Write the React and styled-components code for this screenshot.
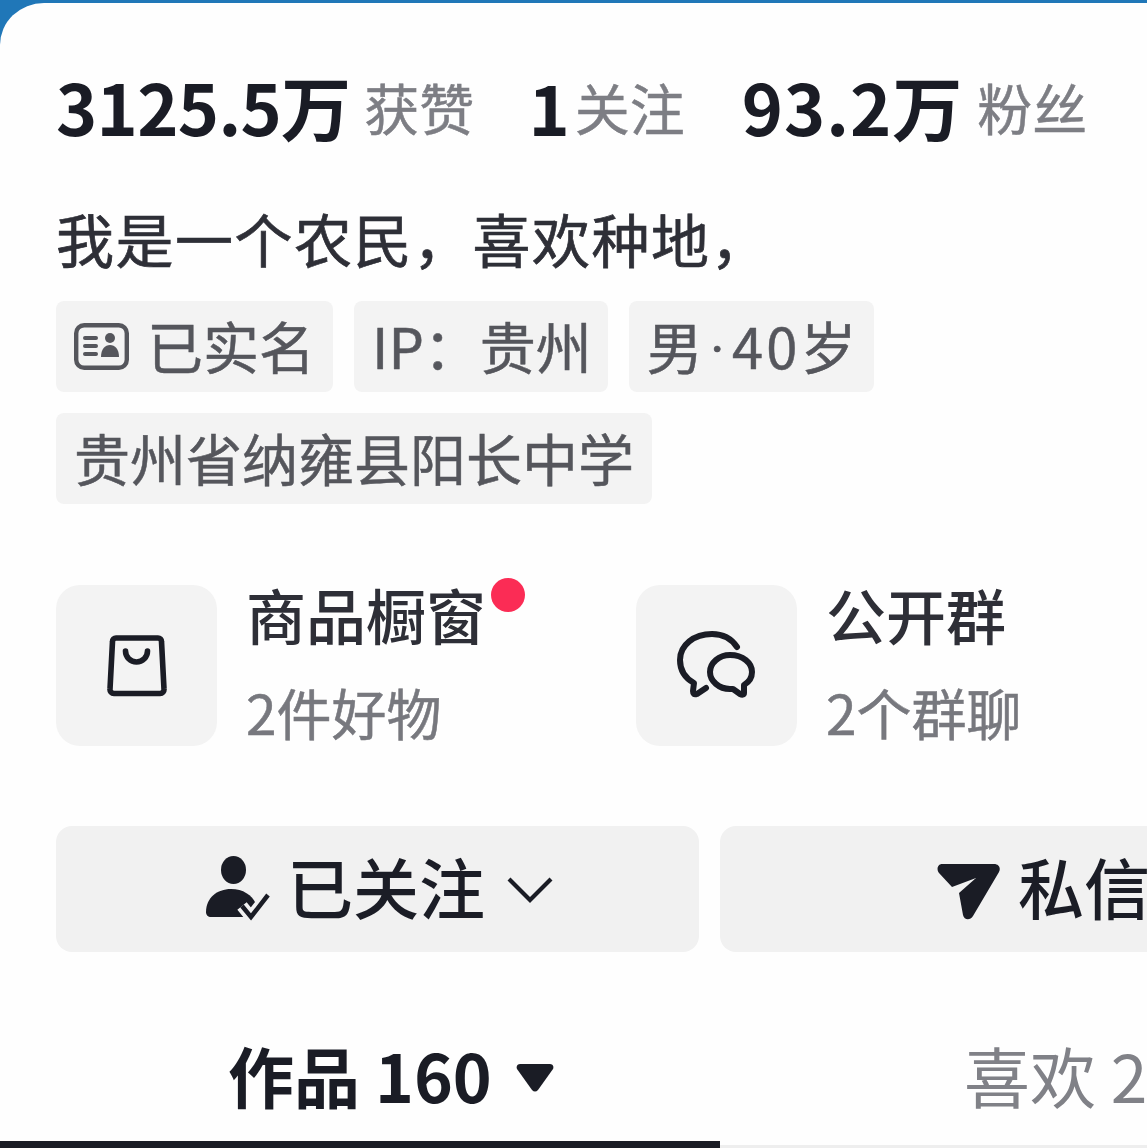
import React from 'react';
import styled, { createGlobalStyle } from 'styled-components';

const GlobalStyle = createGlobalStyle`
  html, body {
    margin: 0;
    padding: 0;
    background: #2077b8;
  }
  body {
    font-family: "Noto Sans CJK SC", "Noto Sans", sans-serif;
    overflow: hidden;
  }
`;

const Card = styled.div`
  width: 1147px;
  height: 1145px;
  margin-top: 3px;
  box-sizing: border-box;
  padding-top: 64px;
  background: #fefefe;
  border-top-left-radius: 44px 42px;
  overflow: hidden;
  display: flex;
  flex-direction: column;
`;

const Stats = styled.div`
  display: flex;
  align-items: center;
  height: 78px;
  padding-left: 56px;
  line-height: 78px;
  white-space: nowrap;
`;

const StatValue = styled.span`
  font-size: 70px;
  font-weight: 700;
  color: #1a1c25;
  letter-spacing: ${(p) => p.$track || 0}px;
  margin-left: ${(p) => p.$offset || 0}px;
`;

const StatLabel = styled.span`
  font-size: 55px;
  color: #7d7e84;
  -webkit-text-stroke: 0.5px #7d7e84;
  margin-left: ${(p) => p.$gap}px;
`;

const Bio = styled.div`
  margin-top: 53px;
  padding-left: 56px;
  font-size: 58px;
  line-height: 80px;
  letter-spacing: 1.5px;
  color: #2e2f37;
  -webkit-text-stroke: 0.7px #2e2f37;
  white-space: nowrap;
`;

const TagList = styled.div`
  display: flex;
  flex-wrap: wrap;
  gap: 21px;
  width: 900px;
  margin-top: 23px;
  padding-left: 56px;
`;

const Tag = styled.div`
  height: 91px;
  box-sizing: border-box;
  padding: 0 18px 4px;
  display: flex;
  align-items: center;
  gap: 18px;
  background: #f3f3f3;
  border-radius: 8px;
  font-size: 56px;
  color: #55565c;
  -webkit-text-stroke: 0.5px #55565c;
  white-space: nowrap;
`;

const IpText = styled.span`
  margin-right: -2px;
`;

const AgeText = styled.span`
  letter-spacing: 3.2px;
  margin-right: -4px;
`;

const NarrowDot = styled.span`
  font-family: "Roboto", sans-serif;
  margin: 0 4px;
`;

const IdSvg = styled.svg`
  flex: none;
  margin-top: 4px;
`;

const Entries = styled.div`
  display: flex;
  margin-top: 81px;
  padding-left: 56px;
`;

const Entry = styled.div`
  width: 580px;
  flex: none;
  display: flex;
  gap: 29px;
`;

const IconTile = styled.div`
  width: 161px;
  height: 161px;
  flex: none;
  display: flex;
  align-items: center;
  justify-content: center;
  background: #f3f3f3;
  border-radius: 24px;
`;

const EntryText = styled.div`
  display: flex;
  flex-direction: column;
`;

const EntryTitleRow = styled.div`
  position: relative;
  width: fit-content;
  height: 58px;
  line-height: 58px;
  font-size: 60px;
  font-weight: 500;
  color: #2e2f37;
  white-space: nowrap;
`;

const Dot = styled.span`
  position: absolute;
  right: -39px;
  top: -7px;
  width: 34px;
  height: 34px;
  border-radius: 50%;
  background: #fb2c55;
`;

const EntrySub = styled.div`
  margin-top: 35px;
  line-height: 66px;
  font-size: 55px;
  color: #77787e;
  -webkit-text-stroke: 0.5px #77787e;
  white-space: nowrap;
`;

const Actions = styled.div`
  display: flex;
  gap: 21px;
  margin-top: 80px;
  padding-left: 56px;
`;

const ActionButton = styled.div`
  width: 643px;
  height: 126px;
  flex: none;
  box-sizing: border-box;
  padding: 0 0 8px ${(p) => p.$pad}px;
  display: flex;
  align-items: center;
  gap: 22px;
  background: #f1f1f1;
  border-radius: 16px;
  font-size: 66px;
  font-weight: 500;
  color: #1b1d26;
  white-space: nowrap;
`;

const ActionIcon = styled.svg`
  flex: none;
  margin-top: ${(p) => p.$drop}px;
  margin-right: ${(p) => p.$pull || 0}px;
`;

const Tabs = styled.div`
  display: flex;
  margin-top: 63px;
`;

const Tab = styled.div`
  width: 720px;
  height: 133px;
  flex: none;
  box-sizing: border-box;
  padding: 19px 0 0 ${(p) => p.$pad}px;
  display: flex;
  align-items: flex-start;
  gap: 24px;
  font-size: 66px;
  line-height: 80px;
  font-weight: ${(p) => (p.$active ? 600 : 400)};
  color: ${(p) => (p.$active ? '#1a1c25' : '#808187')};
  border-bottom: ${(p) => (p.$active ? '7px solid #1a1c25' : '3px solid #eeeeee')};
  white-space: nowrap;
`;

const Caret = styled.svg`
  margin-top: 29px;
  flex: none;
`;

const IdIcon = () => (
  <IdSvg width="55" height="47" viewBox="0 0 55 47">
    <rect x="2.2" y="2.2" width="50.6" height="42.6" rx="8" fill="none" stroke="#55565c" strokeWidth="4.4" />
    <path d="M11 15h11M11 23h11M11 31h11" stroke="#55565c" strokeWidth="4" strokeLinecap="round" />
    <circle cx="36" cy="15" r="5" fill="#55565c" />
    <path d="M27 34c0-8 4-12 9-12s9 4 9 12z" fill="#55565c" />
  </IdSvg>
);

const BagIcon = () => (
  <svg width="60" height="62" viewBox="0 0 60 62">
    <path d="M9 3h42a3.5 3.5 0 0 1 3.5 3.5L57 54a4 4 0 0 1-4 4.5H7a4 4 0 0 1-4-4.5L5.5 6.5A3.5 3.5 0 0 1 9 3z" fill="none" stroke="#1a1c25" strokeWidth="5.6" strokeLinejoin="round" />
    <path d="M18.5 16a11 11 0 0 0 22 0" fill="none" stroke="#1a1c25" strokeWidth="5.6" strokeLinecap="round" />
  </svg>
);

const ChatIcon = () => (
  <svg width="80" height="70" viewBox="0 0 80 70">
    <path d="M60 16C54 7 46 3 35 3 17 3 3 14 3 29c0 10 5 18 14 23l-1 8c0 3 1 4 4 3l9-6" fill="none" stroke="#1a1c25" strokeWidth="6" strokeLinecap="round" strokeLinejoin="round" />
    <path d="M53 24c-11 0-20 8-20 17s9 17 20 17h3l7 5c2 1 4 1 4-1v-8c5-3 8-8 8-13 0-9-9-17-22-17z" fill="none" stroke="#1a1c25" strokeWidth="6" strokeLinejoin="round" />
  </svg>
);

const FollowedIcon = () => (
  <ActionIcon $drop={8} $pull={-5} width="64" height="66" viewBox="0 0 64 66">
    <ellipse cx="27.5" cy="14" rx="12.5" ry="14" fill="#1a1c25" />
    <path d="M0 56c0-14 11-23 25-23 12 0 21 6 25 15v13H5c-3 0-5-2-5-5z" fill="#1a1c25" />
    <path d="M36 50l9 11 17-22" fill="none" stroke="#f1f1f1" strokeWidth="12" />
    <path d="M36 50l9 11 17-22" fill="none" stroke="#1a1c25" strokeWidth="4.5" />
  </ActionIcon>
);

const SendIcon = () => (
  <ActionIcon $drop={14} $pull={-4} width="64" height="58" viewBox="0 0 64 58">
    <path d="M6 1h52c5 0 7 4 5 8L37 53c-3 5-9 4-10-1l-4-22L40 15 16 24 3 10C0 6 2 1 6 1z" fill="#1a1c25" />
  </ActionIcon>
);

function App() {
  return (
    <>
      <GlobalStyle />
      <Card>
        <Stats>
          <StatValue $track={-0.7}>3125.5万</StatValue>
          <StatLabel $gap={14}>获赞</StatLabel>
          <StatValue $offset={54}>1</StatValue>
          <StatLabel $gap={5}>关注</StatLabel>
          <StatValue $offset={57} $track={1}>93.2万</StatValue>
          <StatLabel $gap={14}>粉丝</StatLabel>
        </Stats>
        <Bio>我是一个农民，喜欢种地，</Bio>
        <TagList>
          <Tag><IdIcon />已实名</Tag>
          <Tag><IpText>IP：贵州</IpText></Tag>
          <Tag><AgeText>男<NarrowDot>·</NarrowDot>40岁</AgeText></Tag>
          <Tag>贵州省纳雍县阳长中学</Tag>
        </TagList>
        <Entries>
          <Entry>
            <IconTile><BagIcon /></IconTile>
            <EntryText>
              <EntryTitleRow>商品橱窗<Dot /></EntryTitleRow>
              <EntrySub>2件好物</EntrySub>
            </EntryText>
          </Entry>
          <Entry>
            <IconTile><ChatIcon /></IconTile>
            <EntryText>
              <EntryTitleRow>公开群</EntryTitleRow>
              <EntrySub>2个群聊</EntrySub>
            </EntryText>
          </Entry>
        </Entries>
        <Actions>
          <ActionButton $pad={150}>
            <FollowedIcon />
            已关注
            <ActionIcon $drop={10} width="46" height="28" viewBox="0 0 46 28">
              <path d="M2 3l21 21L44 3" fill="none" stroke="#1a1c25" strokeWidth="4.2" />
            </ActionIcon>
          </ActionButton>
          <ActionButton $pad={216}>
            <SendIcon />
            私信
          </ActionButton>
        </Actions>
        <Tabs>
          <Tab $active $pad={228}>
            作品 160
            <Caret width="38" height="30" viewBox="0 0 38 30">
              <path d="M4 1h30c3 0 4 3 3 5L22 27c-2 2-4 2-6 0L1 6C0 4 1 1 4 1z" fill="#1a1c25" />
            </Caret>
          </Tab>
          <Tab $pad={244}>喜欢 2</Tab>
        </Tabs>
      </Card>
    </>
  );
}

export default App;
